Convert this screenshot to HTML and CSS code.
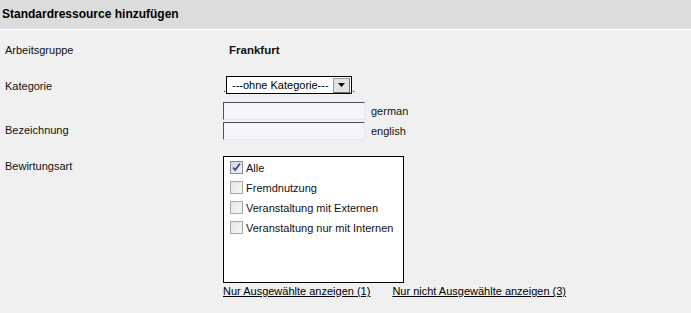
FILE: index.html
```html
<!DOCTYPE html>
<html lang="de">
<head>
    <meta charset="UTF-8">
    <title>Standardressource hinzufügen</title>
    <link rel="stylesheet" href="styles.css">
</head>
<body>

    <div class="header">Standardressource hinzufügen</div>

    <div class="form">
        <div class="row row-group">
            <div class="label">Arbeitsgruppe</div>
            <div class="value"><b class="group-name">Frankfurt</b></div>
        </div>

        <div class="row row-category">
            <div class="label">Kategorie</div>
            <div class="value">
                <span class="dot">.</span>
                <div class="select">
                    <span class="select-text">---ohne Kategorie---</span>
                    <span class="select-btn">
                        <svg width="7" height="4" viewBox="0 0 7 4"><path d="M0 0h7L3.5 4z" fill="#000"/></svg>
                    </span>
                </div>
                <span class="dot">.</span>
            </div>
        </div>

        <div class="row row-name">
            <div class="label">Bezeichnung</div>
            <div class="value">
                <div class="lang-line">
                    <div class="input"></div>
                    <span class="lang">german</span>
                </div>
                <div class="lang-line">
                    <div class="input"></div>
                    <span class="lang">english</span>
                </div>
            </div>
        </div>

        <div class="row row-kind">
            <div class="label">Bewirtungsart</div>
            <div class="value">
                <div class="check-box">
                    <div class="check-row">
                        <span class="check checked">
                            <svg width="11" height="11" viewBox="0 0 11 11"><path d="M2 5.5l2.2 2.6L9 1.5" fill="none" stroke="#3c4f8c" stroke-width="1.8"/></svg>
                        </span>
                        <span>Alle</span>
                    </div>
                    <div class="check-row">
                        <span class="check"></span>
                        <span>Fremdnutzung</span>
                    </div>
                    <div class="check-row">
                        <span class="check"></span>
                        <span>Veranstaltung mit Externen</span>
                    </div>
                    <div class="check-row">
                        <span class="check"></span>
                        <span>Veranstaltung nur mit Internen</span>
                    </div>
                </div>
                <div class="filters">
                    <a href="#">Nur Ausgewählte anzeigen (1)</a>
                    <a href="#">Nur nicht Ausgewählte anzeigen (3)</a>
                </div>
            </div>
        </div>
    </div>

</body>
</html>
```

FILE: styles.css
```css
body {
    margin: 0;
    background-color: #f0f0f0;
    font-family: 'Liberation Sans', Arial, sans-serif;
    font-size: 11px;
    color: #111;
}

.header {
    height: 29px;
    line-height: 29px;
    padding-left: 2px;
    background-color: #dcdcdc;
    border-bottom: 1px solid #fff;
    font-weight: bold;
    font-size: 12px;
    color: #000;
}

.form {
    padding-top: 13px;
}

.row {
    display: grid;
    grid-template-columns: 223px 1fr;
}

.label {
    padding-left: 5px;
    line-height: 14px;
}

.value {
    line-height: 14px;
}

.group-name {
    margin-left: 6px;
    font-size: 11.5px;
}

.row-category {
    margin-top: 19px;
}

.row-category .label {
    padding-top: 3px;
}

.row-category .value {
    display: flex;
    align-items: flex-end;
}

.dot {
    line-height: 12px;
    width: 3px;
}

.select {
    display: flex;
    align-items: center;
    justify-content: space-between;
    width: 124px;
    height: 16px;
    border: 1px solid #000;
    background-color: #fff;
}

.select-text {
    padding-left: 5px;
    color: #000;
}

.select-btn {
    display: flex;
    align-items: center;
    justify-content: center;
    width: 15px;
    height: 13px;
    margin-right: 1px;
    background-color: #e2e2e2;
    border: 1px solid #6f6f6f;
    border-top-color: #9a9a9a;
    border-left-color: #9a9a9a;
}

.row-name {
    margin-top: 8px;
}

.row-name .label {
    align-self: end;
    padding-bottom: 5px;
}

.lang-line {
    display: flex;
    align-items: center;
    height: 18px;
    margin-bottom: 2px;
}

.input {
    width: 140px;
    height: 16px;
    background-color: #f4f5f9;
    border: 1px solid #e6e6e6;
    border-top-color: #4f4f5f;
    border-left-color: #4f4f5f;
}

.lang {
    margin-left: 6px;
}

.row-kind {
    margin-top: 14px;
}

.row-kind .label {
    padding-top: 3px;
}

.check-box {
    width: 179px;
    height: 125px;
    border: 1px solid #000;
    background-color: #fff;
}

.check-row {
    display: flex;
    align-items: center;
    gap: 3px;
    height: 21px;
    padding-left: 6px;
    margin-top: -1px;
}

.check-row:first-child {
    margin-top: 0;
}

.check {
    display: flex;
    align-items: center;
    justify-content: center;
    width: 11px;
    height: 11px;
    border: 1px solid #a8a8a8;
    background: linear-gradient(135deg, #e4e4e4, #f8f8f8);
}

.check.checked {
    border-color: #8a8a96;
    background: linear-gradient(135deg, #d8d8e0, #f2f2f6);
}

.filters {
    display: flex;
    gap: 22px;
    margin-top: 1px;
}

.filters a {
    color: #000;
    text-decoration: underline;
}
```
